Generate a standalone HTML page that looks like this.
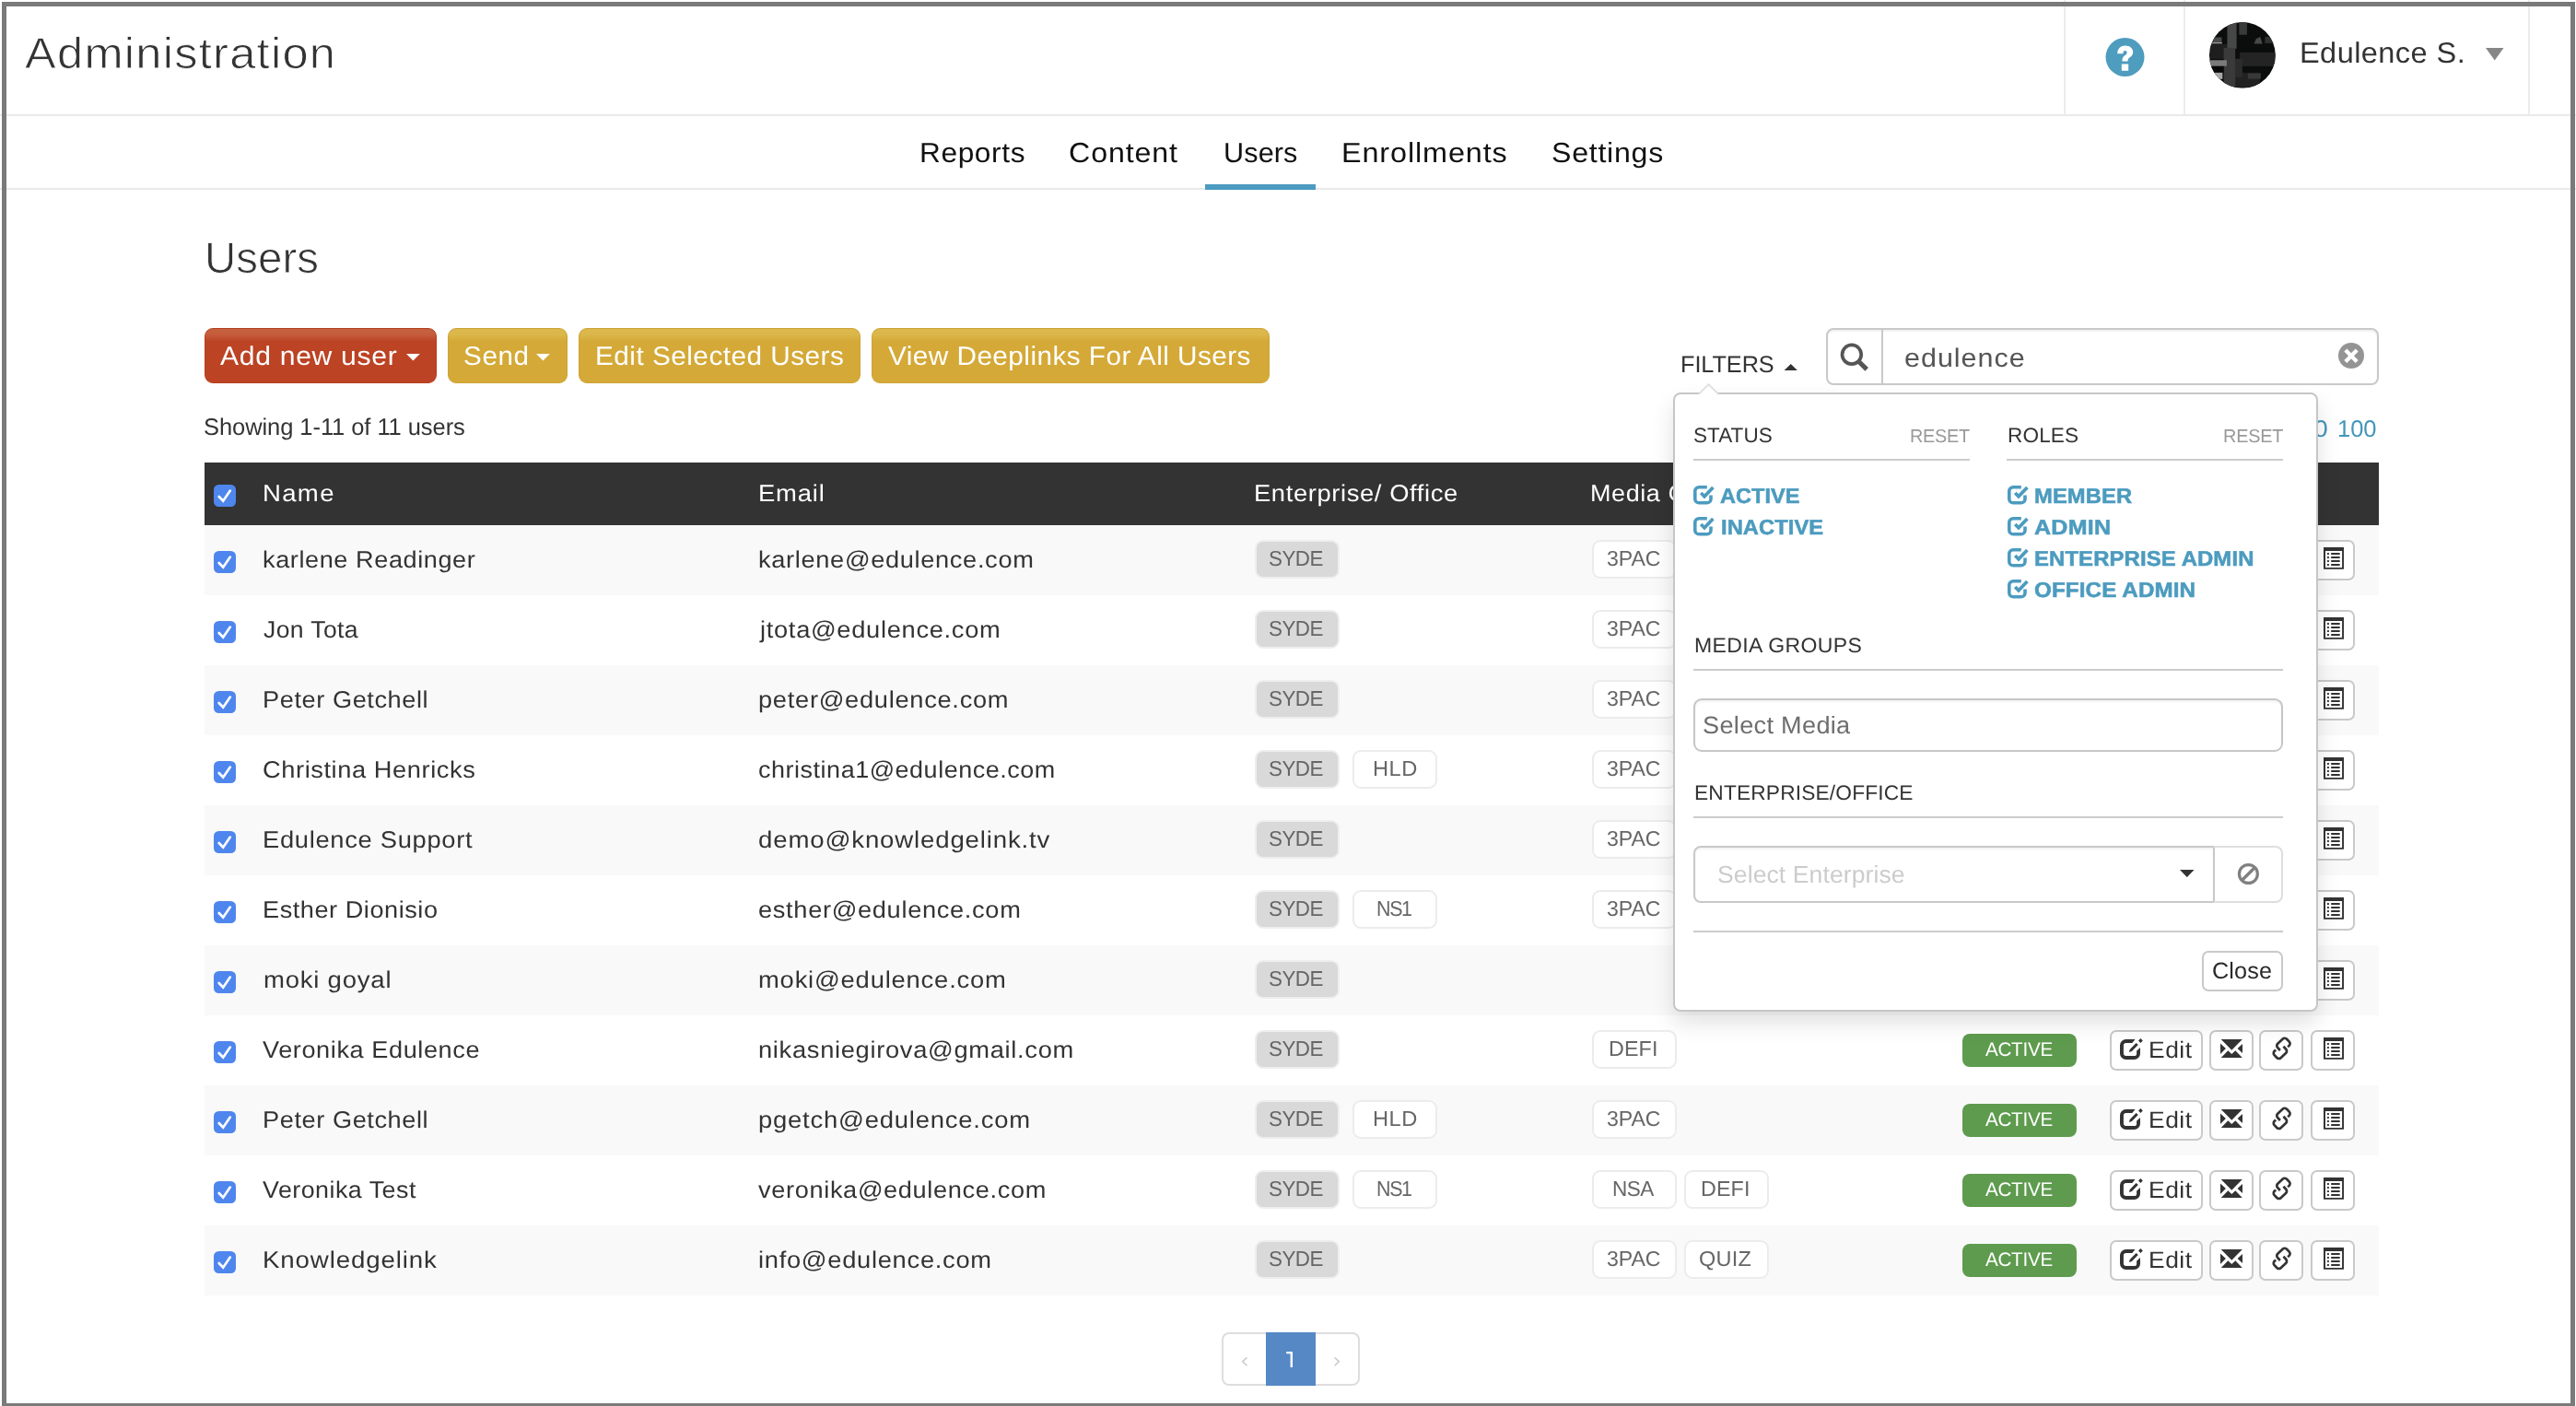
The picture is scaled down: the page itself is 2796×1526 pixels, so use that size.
<!DOCTYPE html>
<html lang="en"><head><meta charset="utf-8"><title>Administration - Users</title>
<style>
html,body{margin:0;padding:0;background:#fff}
body{width:2796px;height:1526px;position:relative;overflow:hidden;font-family:"Liberation Sans",sans-serif;color:#333}
#page{position:absolute;left:0;top:0;width:2796px;height:1526px;will-change:transform}
.t{position:absolute;white-space:pre;transform-origin:0 0;display:block;text-rendering:geometricPrecision}
.abs,i{position:absolute;display:block}
.frame{position:absolute;background:#7a7a7a;z-index:50}
.fl{left:2px;top:2px;width:4.83px;height:1524px}
.ft{left:2px;top:2px;width:2792.9px;height:4.83px}
.fr{left:2790px;top:2px;width:4.9px;height:1524px}
.fb{left:2px;top:1523.1px;width:2792.9px;height:3px}
.hb{left:0;width:2796px;height:2px;background:#e9e9e9}
.vd{top:0;width:2px;height:124px;background:#ececec}
.tri-d,.tri-u{width:0;height:0;border-style:solid;border-color:transparent}
.btn{position:absolute;top:356px;height:60px;border-radius:9px;box-sizing:border-box}
.btn.red{background:linear-gradient(#c6623f 0,#c55d3c 6px,#bc4324 14px,#bc4324 100%);border:1px solid #b5401f}
.btn.yel{background:linear-gradient(#dcb94e 0,#dbb74a 6px,#d4a937 14px,#d4a937 100%);border:1px solid #cda434}
.search{position:absolute;left:1982.2px;top:356.2px;width:599.6px;height:61.6px;box-sizing:border-box;border:2px solid #c9c9c9;border-radius:8px;background:#fff;box-shadow:inset 0 2px 2px rgba(0,0,0,.06)}
.sdiv{left:58px;top:0;width:1.8px;height:100%;background:#c9c9c9}
.thead{position:absolute;left:222px;top:502px;width:2360px;height:68px;background:#333}
.row{position:absolute;left:222px;width:2360px;height:76px}
.row.odd{background:#f9f9f9}
.cb{width:24px;height:24px;border-radius:5.5px;background:#4e86ee}
.cb svg{position:absolute;left:0;top:0}
.bdg{width:91.5px;height:41.8px;box-sizing:border-box;border:2px solid #ececec;border-radius:9px;background:#fff}
.bdg.g{background:#d9d9d9;border-color:#eee}
.act{width:123.9px;height:35.8px;border-radius:8px;background:#5e9b4e}
.ab{position:absolute;width:47.8px;height:43.6px;box-sizing:border-box;border:2px solid #c9c9c9;border-radius:7px;background:#fff}
.pag{position:absolute;left:1326px;top:1446px;width:150px;height:58px;box-sizing:border-box;border:2px solid #ddd;border-radius:8px;background:#fff}
.pa{left:46px;top:-2px;width:54px;height:58px;background:#5588c5}
.panel{position:absolute;left:1816px;top:426px;width:700px;height:672px;box-sizing:border-box;background:#fff;border:2px solid #c6c6c6;border-radius:8px;box-shadow:0 12px 24px rgba(0,0,0,.12)}
.arrow{left:23.4px;top:-12.1px}
.hl{height:2px;background:#ccc}
.inp{position:absolute;box-sizing:border-box;border:2px solid #ccc;border-radius:9px;background:#fff;box-shadow:inset 0 2px 2px rgba(0,0,0,.05)}
</style></head>
<body>
<div id="page">
<div class="frame fl"></div><div class="frame ft"></div><div class="frame fr"></div><div class="frame fb"></div>
<header><i class="hb" style="top:124px"></i>
<span class="t" style="left:27.47px;top:35px;font-size:47.36px;line-height:47.36px;color:#333;letter-spacing:1.189px;transform:scaleX(1.0679);-webkit-text-stroke:0.8px #fff;">Administration</span>
<i class="vd" style="left:2240px"></i><i class="vd" style="left:2370px"></i><i class="vd" style="left:2744px"></i>
<svg class="abs" style="left:2285px;top:41px" width="43" height="43" viewBox="0 0 43 43"><circle cx="21.5" cy="21" r="21" fill="#4e9cbe"/>
<path d="M13.2 17.2 C13.2 11.6 17 8.4 21.8 8.4 C26.6 8.4 30.2 11.2 30.2 15.4 C30.2 18.6 28.4 20.2 26.4 21.6 C24.8 22.8 24.6 23.4 24.6 25.6 H18.4 C18.4 22.2 19 20.8 21.2 19.2 C22.8 18 23.6 17.4 23.6 16 C23.6 14.8 22.8 14 21.6 14 C20.2 14 19.4 15 19.4 17.2 Z M17.8 28.6 H25.2 V35.8 H17.8 Z" fill="#fff"/></svg>
<svg class="abs" style="left:2398.1px;top:23.9px" width="71.8" height="71.8" viewBox="0 0 72 72"><defs><clipPath id="av"><circle cx="36" cy="36" r="36"/></clipPath></defs>
<g clip-path="url(#av)"><rect width="72" height="72" fill="#0b0c0c"/>
<rect x="1" y="24" width="20" height="16" fill="#1e1e1e"/><rect x="33" y="33" width="39" height="15" fill="#242424"/><rect x="28" y="55" width="27" height="16" fill="#212121"/>
<rect x="19.5" y="0" width="10.2" height="29" fill="#474747"/><rect x="15.7" y="28" width="12.6" height="44" fill="#3a3a3a"/><rect x="28" y="40" width="8" height="20" fill="#2c2c2c"/>
<rect x="32.4" y="0" width="8.6" height="13.8" fill="#3a3a3a"/>
<rect x="4.3" y="16.5" width="9.2" height="5.5" fill="#4a4a4a"/><rect x="2" y="22" width="12" height="1.4" fill="#9a9a9a"/>
<rect x="0" y="41.4" width="19" height="6.4" fill="#7a7a7a"/><rect x="2" y="48.4" width="13.4" height="6.5" fill="#080808"/><rect x="6" y="55" width="8.4" height="7" fill="#a8a8a8"/>
<path d="M48.6 23.5 L51 18 L55.5 16 L57.8 23.5 Z" fill="#484848"/><rect x="60.5" y="16" width="9" height="7" fill="#303030"/>
<rect x="42" y="55.7" width="14" height="6" fill="#383838"/></g></svg>
<span class="t" style="left:2495.94px;top:42px;font-size:31.5px;line-height:31.5px;color:#333;letter-spacing:0.422px;transform:scaleX(1.0323);">Edulence S.</span>
<svg class="abs" style="left:2698.2px;top:52px" width="19.5" height="13.5" viewBox="0 0 19.5 13.5"><polygon points="0,0 19.5,0 9.75,13.5" fill="#868686"/></svg>
</header>
<nav><i class="hb" style="top:204px"></i>
<span class="t" style="left:997.71px;top:152px;font-size:30.3px;line-height:30.3px;color:#111;letter-spacing:0.594px;transform:scaleX(1.0437);">Reports</span>
<span class="t" style="left:1160.04px;top:152px;font-size:30.3px;line-height:30.3px;color:#111;letter-spacing:0.841px;transform:scaleX(1.0619);">Content</span>
<span class="t" style="left:1327.68px;top:152px;font-size:30.3px;line-height:30.3px;color:#111;letter-spacing:0.138px;transform:scaleX(1.0088);">Users</span>
<span class="t" style="left:1456.46px;top:152px;font-size:30.3px;line-height:30.3px;color:#111;letter-spacing:0.825px;transform:scaleX(1.0683);">Enrollments</span>
<span class="t" style="left:1683.54px;top:152px;font-size:30.3px;line-height:30.3px;color:#111;letter-spacing:0.709px;transform:scaleX(1.0593);">Settings</span>
<i class="abs" style="left:1308px;top:200px;width:120px;height:6px;background:#4c9bc0"></i>
</nav>
<main>
<span class="t" style="left:222.19px;top:257px;font-size:47.36px;line-height:47.36px;color:#333;letter-spacing:0.046px;transform:scaleX(1.0019);-webkit-text-stroke:0.8px #fff;">Users</span>
<div class="btn red" style="left:222px;width:252.0px"></div>
<span class="t" style="left:239.10px;top:373px;font-size:28.6px;line-height:28.6px;color:#fff;letter-spacing:0.656px;transform:scaleX(1.0529);">Add new user</span>
<svg class="abs" style="left:441px;top:384.2px" width="14.8" height="7.6" viewBox="0 0 14.8 7.6"><polygon points="0,0 14.8,0 7.4,7.6" fill="#fff"/></svg>
<div class="btn yel" style="left:486.2px;width:129.6px"></div>
<span class="t" style="left:503.06px;top:373px;font-size:28.6px;line-height:28.6px;color:#fff;letter-spacing:0.612px;transform:scaleX(1.0358);">Send</span>
<svg class="abs" style="left:582.2px;top:384.2px" width="14.8" height="7.6" viewBox="0 0 14.8 7.6"><polygon points="0,0 14.8,0 7.4,7.6" fill="#fff"/></svg>
<div class="btn yel" style="left:628.2px;width:305.5px"></div>
<span class="t" style="left:646.12px;top:373px;font-size:28.6px;line-height:28.6px;color:#fff;letter-spacing:0.449px;transform:scaleX(1.0413);">Edit Selected Users</span>
<div class="btn yel" style="left:946px;width:432.0px"></div>
<span class="t" style="left:963.80px;top:373px;font-size:28.6px;line-height:28.6px;color:#fff;letter-spacing:0.432px;transform:scaleX(1.0403);">View Deeplinks For All Users</span>
<span class="t" style="left:221.41px;top:452px;font-size:25.7px;line-height:25.7px;color:#333;letter-spacing:-0.072px;transform:scaleX(0.9930);">Showing 1-11 of 11 users</span>
<span class="t" style="left:1824.21px;top:384px;font-size:25.4px;line-height:25.4px;color:#333;letter-spacing:-0.059px;transform:scaleX(0.9957);">FILTERS</span>
<svg class="abs" style="left:1936.4px;top:394.5px" width="15.5" height="7.6" viewBox="0 0 15.5 7.6"><polygon points="0,7.6 7.75,0 15.5,7.6" fill="#333"/></svg>
<div class="search"><i class="sdiv"></i>
<svg class="abs" style="left:0;top:0" width="60" height="57" viewBox="0 0 60 57"><circle cx="25.85" cy="26.8" r="10.35" fill="none" stroke="#555" stroke-width="3.7"/><path d="M32.6 33.5 L42.2 42.85" stroke="#555" stroke-width="5"/></svg>
<svg class="abs" style="left:552.7px;top:12.8px" width="30" height="30" viewBox="-15 -15 30 30"><circle cx="0" cy="0" r="14" fill="#949494"/><path d="M-6.2 -6 L6.2 6.4 M6.2 -6 L-6.2 6.4" stroke="#fff" stroke-width="4.3"/></svg>
</div>
<span class="t" style="left:2066.53px;top:375px;font-size:28.4px;line-height:28.4px;color:#555;letter-spacing:0.918px;transform:scaleX(1.0744);">edulence</span>
<span class="t" style="left:2494.32px;top:454px;font-size:25.7px;line-height:25.7px;color:#4296ba;letter-spacing:1.709px;transform:scaleX(1.0829);">50</span>
<span class="t" style="left:2537.20px;top:454px;font-size:25.7px;line-height:25.7px;color:#4296ba;letter-spacing:-0.084px;transform:scaleX(0.9951);">100</span>
<div class="thead"></div>
<i class="cb" style="left:232px;top:526px"><svg width="24" height="24" viewBox="0 0 24 24"><path d="M5.7 13 L10.2 17.7 L17.8 6.6" fill="none" stroke="#fff" stroke-width="2.7" stroke-linecap="round" stroke-linejoin="miter"/></svg></i>
<span class="t" style="left:284.85px;top:524px;font-size:25.7px;line-height:25.7px;color:#fff;letter-spacing:1.226px;transform:scaleX(1.0728);">Name</span>
<span class="t" style="left:822.97px;top:524px;font-size:25.7px;line-height:25.7px;color:#fff;letter-spacing:0.778px;transform:scaleX(1.0670);">Email</span>
<span class="t" style="left:1360.57px;top:524px;font-size:25.7px;line-height:25.7px;color:#fff;letter-spacing:0.572px;transform:scaleX(1.0647);">Enterprise/ Office</span>
<span class="t" style="left:1726.10px;top:524px;font-size:25.7px;line-height:25.7px;color:#fff;letter-spacing:0.561px;transform:scaleX(1.0500);">Media Groups</span>
<span class="t" style="left:2128.94px;top:524px;font-size:25.7px;line-height:25.7px;color:#fff;letter-spacing:0.680px;transform:scaleX(1.0622);">Status</span>
<div class="row odd" style="top:570px"></div>
<i class="cb" style="left:232px;top:598px"><svg width="24" height="24" viewBox="0 0 24 24"><path d="M5.7 13 L10.2 17.7 L17.8 6.6" fill="none" stroke="#fff" stroke-width="2.7" stroke-linecap="round" stroke-linejoin="miter"/></svg></i>
<span class="t" style="left:285.25px;top:596px;font-size:25.7px;line-height:25.7px;color:#333;letter-spacing:0.556px;transform:scaleX(1.0547);">karlene Readinger</span>
<span class="t" style="left:822.94px;top:596px;font-size:25.7px;line-height:25.7px;color:#333;letter-spacing:0.636px;transform:scaleX(1.0584);">karlene@edulence.com</span>
<i class="bdg g" style="left:1362.3px;top:586.1px"></i>
<span class="t" style="left:1376.93px;top:595px;font-size:23.1px;line-height:23.1px;color:#666;letter-spacing:-0.523px;transform:scaleX(0.9697);">SYDE</span>
<i class="bdg" style="left:1728.2px;top:586.1px"></i>
<span class="t" style="left:1743.90px;top:595px;font-size:23.1px;line-height:23.1px;color:#666;letter-spacing:-0.020px;transform:scaleX(0.9987);">3PAC</span>
<i class="act" style="left:2130px;top:589.9px"></i>
<span class="t" style="left:2154.90px;top:597px;font-size:21.1px;line-height:21.1px;color:#fff;letter-spacing:-0.278px;transform:scaleX(0.9782);">ACTIVE</span>
<div class="ab" style="left:2290.1px;top:586.1px;width:101.3px"><svg class="abs" style="left:8.9px;top:5.9px" width="26" height="25" viewBox="0 -2 26 25"><path d="M16.8 1.95 H6.5 A4.55 4.55 0 0 0 1.95 6.5 V15.4 A4.55 4.55 0 0 0 6.5 19.95 H15.5 A4.55 4.55 0 0 0 20.05 15.4 V8.9" fill="none" stroke="#333" stroke-width="3.9"/><path d="M16.8 -0.2 L17.4 -0.2 L17.4 4.1 L13.3 4.1 Z M17.9 8.7 L22.3 8.7 L17.9 12.8 Z" fill="#fff"/><path d="M9.8 14 L10.8 10.9 L17.6 4.1 L19.8 6.1 L12.9 13 Z M22.4 -0.9 L24.8 1.5 L22.4 3.9 L20 1.5 Z" fill="#333"/></svg></div>
<span class="t" style="left:2331.90px;top:596px;font-size:25.2px;line-height:25.2px;color:#333;letter-spacing:0.515px;transform:scaleX(1.0478);">Edit</span>
<div class="ab" style="left:2398.15px;top:586.1px"><svg class="abs" style="left:9.9px;top:7.8px" width="24.2" height="20.2" viewBox="0 0 24.2 20.2"><path d="M0.7 0 H23.9 L12.3 11.8 Z M0 4.4 L5.9 10.1 L0 15.9 Z M24.1 5 L18.6 10.1 L24.1 15.2 Z M0.7 20.1 L8.3 12.2 L12.3 16.1 L16.3 12.2 L23.9 20.1 Z" fill="#333"/></svg></div>
<div class="ab" style="left:2452.15px;top:586.1px"><svg class="abs" style="left:0;top:0" width="43.8" height="39.6" viewBox="0 0 43.8 39.6"><g fill="none" stroke="#333" stroke-width="2.7"><path transform="translate(16.05 14.8) rotate(-43)" d="M0 7.1 V3 A3 3 0 0 1 3 0 H10.6 A3 3 0 0 1 13.6 3 V7 A3 3 0 0 1 10.6 10 H8.6"/><path transform="rotate(180 22.67 17.87) translate(16.05 14.8) rotate(-43)" d="M0 7.1 V3 A3 3 0 0 1 3 0 H10.6 A3 3 0 0 1 13.6 3 V7 A3 3 0 0 1 10.6 10 H8.6"/></g></svg></div>
<div class="ab" style="left:2508.14px;top:586.1px"><svg class="abs" style="left:11.46px;top:6px" width="22.2" height="24" viewBox="0 0 22.2 24"><path d="M0 0 H22.1 V23.8 H0 Z M2 3.9 V22 H20.1 V3.9 Z" fill="#333" fill-rule="evenodd"/><g stroke="#333" stroke-width="1.9" stroke-linecap="round"><path d="M4.7 6.95 h0.5 M8.9 6.95 h8.1 M4.7 11 h0.5 M8.9 11 h8.1 M4.7 15 h0.5 M8.9 15 h8.1 M4.7 19 h0.5 M8.9 19 h8.1"/></g></svg></div>
<div class="row" style="top:646px"></div>
<i class="cb" style="left:232px;top:674px"><svg width="24" height="24" viewBox="0 0 24 24"><path d="M5.7 13 L10.2 17.7 L17.8 6.6" fill="none" stroke="#fff" stroke-width="2.7" stroke-linecap="round" stroke-linejoin="miter"/></svg></i>
<span class="t" style="left:286.30px;top:672px;font-size:25.7px;line-height:25.7px;color:#333;letter-spacing:0.372px;transform:scaleX(1.0336);">Jon Tota</span>
<span class="t" style="left:825.06px;top:672px;font-size:25.7px;line-height:25.7px;color:#333;letter-spacing:0.652px;transform:scaleX(1.0614);">jtota@edulence.com</span>
<i class="bdg g" style="left:1362.3px;top:662.1px"></i>
<span class="t" style="left:1376.93px;top:671px;font-size:23.1px;line-height:23.1px;color:#666;letter-spacing:-0.523px;transform:scaleX(0.9697);">SYDE</span>
<i class="bdg" style="left:1728.2px;top:662.1px"></i>
<span class="t" style="left:1743.90px;top:671px;font-size:23.1px;line-height:23.1px;color:#666;letter-spacing:-0.020px;transform:scaleX(0.9987);">3PAC</span>
<i class="act" style="left:2130px;top:665.9px"></i>
<span class="t" style="left:2154.90px;top:673px;font-size:21.1px;line-height:21.1px;color:#fff;letter-spacing:-0.278px;transform:scaleX(0.9782);">ACTIVE</span>
<div class="ab" style="left:2290.1px;top:662.1px;width:101.3px"><svg class="abs" style="left:8.9px;top:5.9px" width="26" height="25" viewBox="0 -2 26 25"><path d="M16.8 1.95 H6.5 A4.55 4.55 0 0 0 1.95 6.5 V15.4 A4.55 4.55 0 0 0 6.5 19.95 H15.5 A4.55 4.55 0 0 0 20.05 15.4 V8.9" fill="none" stroke="#333" stroke-width="3.9"/><path d="M16.8 -0.2 L17.4 -0.2 L17.4 4.1 L13.3 4.1 Z M17.9 8.7 L22.3 8.7 L17.9 12.8 Z" fill="#fff"/><path d="M9.8 14 L10.8 10.9 L17.6 4.1 L19.8 6.1 L12.9 13 Z M22.4 -0.9 L24.8 1.5 L22.4 3.9 L20 1.5 Z" fill="#333"/></svg></div>
<span class="t" style="left:2331.90px;top:672px;font-size:25.2px;line-height:25.2px;color:#333;letter-spacing:0.515px;transform:scaleX(1.0478);">Edit</span>
<div class="ab" style="left:2398.15px;top:662.1px"><svg class="abs" style="left:9.9px;top:7.8px" width="24.2" height="20.2" viewBox="0 0 24.2 20.2"><path d="M0.7 0 H23.9 L12.3 11.8 Z M0 4.4 L5.9 10.1 L0 15.9 Z M24.1 5 L18.6 10.1 L24.1 15.2 Z M0.7 20.1 L8.3 12.2 L12.3 16.1 L16.3 12.2 L23.9 20.1 Z" fill="#333"/></svg></div>
<div class="ab" style="left:2452.15px;top:662.1px"><svg class="abs" style="left:0;top:0" width="43.8" height="39.6" viewBox="0 0 43.8 39.6"><g fill="none" stroke="#333" stroke-width="2.7"><path transform="translate(16.05 14.8) rotate(-43)" d="M0 7.1 V3 A3 3 0 0 1 3 0 H10.6 A3 3 0 0 1 13.6 3 V7 A3 3 0 0 1 10.6 10 H8.6"/><path transform="rotate(180 22.67 17.87) translate(16.05 14.8) rotate(-43)" d="M0 7.1 V3 A3 3 0 0 1 3 0 H10.6 A3 3 0 0 1 13.6 3 V7 A3 3 0 0 1 10.6 10 H8.6"/></g></svg></div>
<div class="ab" style="left:2508.14px;top:662.1px"><svg class="abs" style="left:11.46px;top:6px" width="22.2" height="24" viewBox="0 0 22.2 24"><path d="M0 0 H22.1 V23.8 H0 Z M2 3.9 V22 H20.1 V3.9 Z" fill="#333" fill-rule="evenodd"/><g stroke="#333" stroke-width="1.9" stroke-linecap="round"><path d="M4.7 6.95 h0.5 M8.9 6.95 h8.1 M4.7 11 h0.5 M8.9 11 h8.1 M4.7 15 h0.5 M8.9 15 h8.1 M4.7 19 h0.5 M8.9 19 h8.1"/></g></svg></div>
<div class="row odd" style="top:722px"></div>
<i class="cb" style="left:232px;top:750px"><svg width="24" height="24" viewBox="0 0 24 24"><path d="M5.7 13 L10.2 17.7 L17.8 6.6" fill="none" stroke="#fff" stroke-width="2.7" stroke-linecap="round" stroke-linejoin="miter"/></svg></i>
<span class="t" style="left:284.88px;top:748px;font-size:25.7px;line-height:25.7px;color:#333;letter-spacing:0.545px;transform:scaleX(1.0575);">Peter Getchell</span>
<span class="t" style="left:823.24px;top:748px;font-size:25.7px;line-height:25.7px;color:#333;letter-spacing:0.670px;transform:scaleX(1.0610);">peter@edulence.com</span>
<i class="bdg g" style="left:1362.3px;top:738.1px"></i>
<span class="t" style="left:1376.93px;top:747px;font-size:23.1px;line-height:23.1px;color:#666;letter-spacing:-0.523px;transform:scaleX(0.9697);">SYDE</span>
<i class="bdg" style="left:1728.2px;top:738.1px"></i>
<span class="t" style="left:1743.90px;top:747px;font-size:23.1px;line-height:23.1px;color:#666;letter-spacing:-0.020px;transform:scaleX(0.9987);">3PAC</span>
<i class="act" style="left:2130px;top:741.9px"></i>
<span class="t" style="left:2154.90px;top:749px;font-size:21.1px;line-height:21.1px;color:#fff;letter-spacing:-0.278px;transform:scaleX(0.9782);">ACTIVE</span>
<div class="ab" style="left:2290.1px;top:738.1px;width:101.3px"><svg class="abs" style="left:8.9px;top:5.9px" width="26" height="25" viewBox="0 -2 26 25"><path d="M16.8 1.95 H6.5 A4.55 4.55 0 0 0 1.95 6.5 V15.4 A4.55 4.55 0 0 0 6.5 19.95 H15.5 A4.55 4.55 0 0 0 20.05 15.4 V8.9" fill="none" stroke="#333" stroke-width="3.9"/><path d="M16.8 -0.2 L17.4 -0.2 L17.4 4.1 L13.3 4.1 Z M17.9 8.7 L22.3 8.7 L17.9 12.8 Z" fill="#fff"/><path d="M9.8 14 L10.8 10.9 L17.6 4.1 L19.8 6.1 L12.9 13 Z M22.4 -0.9 L24.8 1.5 L22.4 3.9 L20 1.5 Z" fill="#333"/></svg></div>
<span class="t" style="left:2331.90px;top:748px;font-size:25.2px;line-height:25.2px;color:#333;letter-spacing:0.515px;transform:scaleX(1.0478);">Edit</span>
<div class="ab" style="left:2398.15px;top:738.1px"><svg class="abs" style="left:9.9px;top:7.8px" width="24.2" height="20.2" viewBox="0 0 24.2 20.2"><path d="M0.7 0 H23.9 L12.3 11.8 Z M0 4.4 L5.9 10.1 L0 15.9 Z M24.1 5 L18.6 10.1 L24.1 15.2 Z M0.7 20.1 L8.3 12.2 L12.3 16.1 L16.3 12.2 L23.9 20.1 Z" fill="#333"/></svg></div>
<div class="ab" style="left:2452.15px;top:738.1px"><svg class="abs" style="left:0;top:0" width="43.8" height="39.6" viewBox="0 0 43.8 39.6"><g fill="none" stroke="#333" stroke-width="2.7"><path transform="translate(16.05 14.8) rotate(-43)" d="M0 7.1 V3 A3 3 0 0 1 3 0 H10.6 A3 3 0 0 1 13.6 3 V7 A3 3 0 0 1 10.6 10 H8.6"/><path transform="rotate(180 22.67 17.87) translate(16.05 14.8) rotate(-43)" d="M0 7.1 V3 A3 3 0 0 1 3 0 H10.6 A3 3 0 0 1 13.6 3 V7 A3 3 0 0 1 10.6 10 H8.6"/></g></svg></div>
<div class="ab" style="left:2508.14px;top:738.1px"><svg class="abs" style="left:11.46px;top:6px" width="22.2" height="24" viewBox="0 0 22.2 24"><path d="M0 0 H22.1 V23.8 H0 Z M2 3.9 V22 H20.1 V3.9 Z" fill="#333" fill-rule="evenodd"/><g stroke="#333" stroke-width="1.9" stroke-linecap="round"><path d="M4.7 6.95 h0.5 M8.9 6.95 h8.1 M4.7 11 h0.5 M8.9 11 h8.1 M4.7 15 h0.5 M8.9 15 h8.1 M4.7 19 h0.5 M8.9 19 h8.1"/></g></svg></div>
<div class="row" style="top:798px"></div>
<i class="cb" style="left:232px;top:826px"><svg width="24" height="24" viewBox="0 0 24 24"><path d="M5.7 13 L10.2 17.7 L17.8 6.6" fill="none" stroke="#fff" stroke-width="2.7" stroke-linecap="round" stroke-linejoin="miter"/></svg></i>
<span class="t" style="left:284.84px;top:824px;font-size:25.7px;line-height:25.7px;color:#333;letter-spacing:0.558px;transform:scaleX(1.0595);">Christina Henricks</span>
<span class="t" style="left:822.95px;top:824px;font-size:25.7px;line-height:25.7px;color:#333;letter-spacing:0.510px;transform:scaleX(1.0490);">christina1@edulence.com</span>
<i class="bdg g" style="left:1362.3px;top:814.1px"></i>
<span class="t" style="left:1376.93px;top:823px;font-size:23.1px;line-height:23.1px;color:#666;letter-spacing:-0.523px;transform:scaleX(0.9697);">SYDE</span>
<i class="bdg" style="left:1468.2px;top:814.1px"></i>
<span class="t" style="left:1489.63px;top:823px;font-size:23.1px;line-height:23.1px;color:#666;letter-spacing:0.435px;transform:scaleX(1.0244);">HLD</span>
<i class="bdg" style="left:1728.2px;top:814.1px"></i>
<span class="t" style="left:1743.90px;top:823px;font-size:23.1px;line-height:23.1px;color:#666;letter-spacing:-0.020px;transform:scaleX(0.9987);">3PAC</span>
<i class="act" style="left:2130px;top:817.9px"></i>
<span class="t" style="left:2154.90px;top:825px;font-size:21.1px;line-height:21.1px;color:#fff;letter-spacing:-0.278px;transform:scaleX(0.9782);">ACTIVE</span>
<div class="ab" style="left:2290.1px;top:814.1px;width:101.3px"><svg class="abs" style="left:8.9px;top:5.9px" width="26" height="25" viewBox="0 -2 26 25"><path d="M16.8 1.95 H6.5 A4.55 4.55 0 0 0 1.95 6.5 V15.4 A4.55 4.55 0 0 0 6.5 19.95 H15.5 A4.55 4.55 0 0 0 20.05 15.4 V8.9" fill="none" stroke="#333" stroke-width="3.9"/><path d="M16.8 -0.2 L17.4 -0.2 L17.4 4.1 L13.3 4.1 Z M17.9 8.7 L22.3 8.7 L17.9 12.8 Z" fill="#fff"/><path d="M9.8 14 L10.8 10.9 L17.6 4.1 L19.8 6.1 L12.9 13 Z M22.4 -0.9 L24.8 1.5 L22.4 3.9 L20 1.5 Z" fill="#333"/></svg></div>
<span class="t" style="left:2331.90px;top:824px;font-size:25.2px;line-height:25.2px;color:#333;letter-spacing:0.515px;transform:scaleX(1.0478);">Edit</span>
<div class="ab" style="left:2398.15px;top:814.1px"><svg class="abs" style="left:9.9px;top:7.8px" width="24.2" height="20.2" viewBox="0 0 24.2 20.2"><path d="M0.7 0 H23.9 L12.3 11.8 Z M0 4.4 L5.9 10.1 L0 15.9 Z M24.1 5 L18.6 10.1 L24.1 15.2 Z M0.7 20.1 L8.3 12.2 L12.3 16.1 L16.3 12.2 L23.9 20.1 Z" fill="#333"/></svg></div>
<div class="ab" style="left:2452.15px;top:814.1px"><svg class="abs" style="left:0;top:0" width="43.8" height="39.6" viewBox="0 0 43.8 39.6"><g fill="none" stroke="#333" stroke-width="2.7"><path transform="translate(16.05 14.8) rotate(-43)" d="M0 7.1 V3 A3 3 0 0 1 3 0 H10.6 A3 3 0 0 1 13.6 3 V7 A3 3 0 0 1 10.6 10 H8.6"/><path transform="rotate(180 22.67 17.87) translate(16.05 14.8) rotate(-43)" d="M0 7.1 V3 A3 3 0 0 1 3 0 H10.6 A3 3 0 0 1 13.6 3 V7 A3 3 0 0 1 10.6 10 H8.6"/></g></svg></div>
<div class="ab" style="left:2508.14px;top:814.1px"><svg class="abs" style="left:11.46px;top:6px" width="22.2" height="24" viewBox="0 0 22.2 24"><path d="M0 0 H22.1 V23.8 H0 Z M2 3.9 V22 H20.1 V3.9 Z" fill="#333" fill-rule="evenodd"/><g stroke="#333" stroke-width="1.9" stroke-linecap="round"><path d="M4.7 6.95 h0.5 M8.9 6.95 h8.1 M4.7 11 h0.5 M8.9 11 h8.1 M4.7 15 h0.5 M8.9 15 h8.1 M4.7 19 h0.5 M8.9 19 h8.1"/></g></svg></div>
<div class="row odd" style="top:874px"></div>
<i class="cb" style="left:232px;top:902px"><svg width="24" height="24" viewBox="0 0 24 24"><path d="M5.7 13 L10.2 17.7 L17.8 6.6" fill="none" stroke="#fff" stroke-width="2.7" stroke-linecap="round" stroke-linejoin="miter"/></svg></i>
<span class="t" style="left:284.87px;top:900px;font-size:25.7px;line-height:25.7px;color:#333;letter-spacing:0.655px;transform:scaleX(1.0632);">Edulence Support</span>
<span class="t" style="left:822.93px;top:900px;font-size:25.7px;line-height:25.7px;color:#333;letter-spacing:0.786px;transform:scaleX(1.0743);">demo@knowledgelink.tv</span>
<i class="bdg g" style="left:1362.3px;top:890.1px"></i>
<span class="t" style="left:1376.93px;top:899px;font-size:23.1px;line-height:23.1px;color:#666;letter-spacing:-0.523px;transform:scaleX(0.9697);">SYDE</span>
<i class="bdg" style="left:1728.2px;top:890.1px"></i>
<span class="t" style="left:1743.90px;top:899px;font-size:23.1px;line-height:23.1px;color:#666;letter-spacing:-0.020px;transform:scaleX(0.9987);">3PAC</span>
<i class="act" style="left:2130px;top:893.9px"></i>
<span class="t" style="left:2154.90px;top:901px;font-size:21.1px;line-height:21.1px;color:#fff;letter-spacing:-0.278px;transform:scaleX(0.9782);">ACTIVE</span>
<div class="ab" style="left:2290.1px;top:890.1px;width:101.3px"><svg class="abs" style="left:8.9px;top:5.9px" width="26" height="25" viewBox="0 -2 26 25"><path d="M16.8 1.95 H6.5 A4.55 4.55 0 0 0 1.95 6.5 V15.4 A4.55 4.55 0 0 0 6.5 19.95 H15.5 A4.55 4.55 0 0 0 20.05 15.4 V8.9" fill="none" stroke="#333" stroke-width="3.9"/><path d="M16.8 -0.2 L17.4 -0.2 L17.4 4.1 L13.3 4.1 Z M17.9 8.7 L22.3 8.7 L17.9 12.8 Z" fill="#fff"/><path d="M9.8 14 L10.8 10.9 L17.6 4.1 L19.8 6.1 L12.9 13 Z M22.4 -0.9 L24.8 1.5 L22.4 3.9 L20 1.5 Z" fill="#333"/></svg></div>
<span class="t" style="left:2331.90px;top:900px;font-size:25.2px;line-height:25.2px;color:#333;letter-spacing:0.515px;transform:scaleX(1.0478);">Edit</span>
<div class="ab" style="left:2398.15px;top:890.1px"><svg class="abs" style="left:9.9px;top:7.8px" width="24.2" height="20.2" viewBox="0 0 24.2 20.2"><path d="M0.7 0 H23.9 L12.3 11.8 Z M0 4.4 L5.9 10.1 L0 15.9 Z M24.1 5 L18.6 10.1 L24.1 15.2 Z M0.7 20.1 L8.3 12.2 L12.3 16.1 L16.3 12.2 L23.9 20.1 Z" fill="#333"/></svg></div>
<div class="ab" style="left:2452.15px;top:890.1px"><svg class="abs" style="left:0;top:0" width="43.8" height="39.6" viewBox="0 0 43.8 39.6"><g fill="none" stroke="#333" stroke-width="2.7"><path transform="translate(16.05 14.8) rotate(-43)" d="M0 7.1 V3 A3 3 0 0 1 3 0 H10.6 A3 3 0 0 1 13.6 3 V7 A3 3 0 0 1 10.6 10 H8.6"/><path transform="rotate(180 22.67 17.87) translate(16.05 14.8) rotate(-43)" d="M0 7.1 V3 A3 3 0 0 1 3 0 H10.6 A3 3 0 0 1 13.6 3 V7 A3 3 0 0 1 10.6 10 H8.6"/></g></svg></div>
<div class="ab" style="left:2508.14px;top:890.1px"><svg class="abs" style="left:11.46px;top:6px" width="22.2" height="24" viewBox="0 0 22.2 24"><path d="M0 0 H22.1 V23.8 H0 Z M2 3.9 V22 H20.1 V3.9 Z" fill="#333" fill-rule="evenodd"/><g stroke="#333" stroke-width="1.9" stroke-linecap="round"><path d="M4.7 6.95 h0.5 M8.9 6.95 h8.1 M4.7 11 h0.5 M8.9 11 h8.1 M4.7 15 h0.5 M8.9 15 h8.1 M4.7 19 h0.5 M8.9 19 h8.1"/></g></svg></div>
<div class="row" style="top:950px"></div>
<i class="cb" style="left:232px;top:978px"><svg width="24" height="24" viewBox="0 0 24 24"><path d="M5.7 13 L10.2 17.7 L17.8 6.6" fill="none" stroke="#fff" stroke-width="2.7" stroke-linecap="round" stroke-linejoin="miter"/></svg></i>
<span class="t" style="left:284.89px;top:976px;font-size:25.7px;line-height:25.7px;color:#333;letter-spacing:0.522px;transform:scaleX(1.0553);">Esther Dionisio</span>
<span class="t" style="left:822.94px;top:976px;font-size:25.7px;line-height:25.7px;color:#333;letter-spacing:0.644px;transform:scaleX(1.0589);">esther@edulence.com</span>
<i class="bdg g" style="left:1362.3px;top:966.1px"></i>
<span class="t" style="left:1376.93px;top:975px;font-size:23.1px;line-height:23.1px;color:#666;letter-spacing:-0.523px;transform:scaleX(0.9697);">SYDE</span>
<i class="bdg" style="left:1468.2px;top:966.1px"></i>
<span class="t" style="left:1494.02px;top:975px;font-size:23.1px;line-height:23.1px;color:#666;letter-spacing:-1.404px;transform:scaleX(0.9262);">NS1</span>
<i class="bdg" style="left:1728.2px;top:966.1px"></i>
<span class="t" style="left:1743.90px;top:975px;font-size:23.1px;line-height:23.1px;color:#666;letter-spacing:-0.020px;transform:scaleX(0.9987);">3PAC</span>
<i class="act" style="left:2130px;top:969.9px"></i>
<span class="t" style="left:2154.90px;top:977px;font-size:21.1px;line-height:21.1px;color:#fff;letter-spacing:-0.278px;transform:scaleX(0.9782);">ACTIVE</span>
<div class="ab" style="left:2290.1px;top:966.1px;width:101.3px"><svg class="abs" style="left:8.9px;top:5.9px" width="26" height="25" viewBox="0 -2 26 25"><path d="M16.8 1.95 H6.5 A4.55 4.55 0 0 0 1.95 6.5 V15.4 A4.55 4.55 0 0 0 6.5 19.95 H15.5 A4.55 4.55 0 0 0 20.05 15.4 V8.9" fill="none" stroke="#333" stroke-width="3.9"/><path d="M16.8 -0.2 L17.4 -0.2 L17.4 4.1 L13.3 4.1 Z M17.9 8.7 L22.3 8.7 L17.9 12.8 Z" fill="#fff"/><path d="M9.8 14 L10.8 10.9 L17.6 4.1 L19.8 6.1 L12.9 13 Z M22.4 -0.9 L24.8 1.5 L22.4 3.9 L20 1.5 Z" fill="#333"/></svg></div>
<span class="t" style="left:2331.90px;top:976px;font-size:25.2px;line-height:25.2px;color:#333;letter-spacing:0.515px;transform:scaleX(1.0478);">Edit</span>
<div class="ab" style="left:2398.15px;top:966.1px"><svg class="abs" style="left:9.9px;top:7.8px" width="24.2" height="20.2" viewBox="0 0 24.2 20.2"><path d="M0.7 0 H23.9 L12.3 11.8 Z M0 4.4 L5.9 10.1 L0 15.9 Z M24.1 5 L18.6 10.1 L24.1 15.2 Z M0.7 20.1 L8.3 12.2 L12.3 16.1 L16.3 12.2 L23.9 20.1 Z" fill="#333"/></svg></div>
<div class="ab" style="left:2452.15px;top:966.1px"><svg class="abs" style="left:0;top:0" width="43.8" height="39.6" viewBox="0 0 43.8 39.6"><g fill="none" stroke="#333" stroke-width="2.7"><path transform="translate(16.05 14.8) rotate(-43)" d="M0 7.1 V3 A3 3 0 0 1 3 0 H10.6 A3 3 0 0 1 13.6 3 V7 A3 3 0 0 1 10.6 10 H8.6"/><path transform="rotate(180 22.67 17.87) translate(16.05 14.8) rotate(-43)" d="M0 7.1 V3 A3 3 0 0 1 3 0 H10.6 A3 3 0 0 1 13.6 3 V7 A3 3 0 0 1 10.6 10 H8.6"/></g></svg></div>
<div class="ab" style="left:2508.14px;top:966.1px"><svg class="abs" style="left:11.46px;top:6px" width="22.2" height="24" viewBox="0 0 22.2 24"><path d="M0 0 H22.1 V23.8 H0 Z M2 3.9 V22 H20.1 V3.9 Z" fill="#333" fill-rule="evenodd"/><g stroke="#333" stroke-width="1.9" stroke-linecap="round"><path d="M4.7 6.95 h0.5 M8.9 6.95 h8.1 M4.7 11 h0.5 M8.9 11 h8.1 M4.7 15 h0.5 M8.9 15 h8.1 M4.7 19 h0.5 M8.9 19 h8.1"/></g></svg></div>
<div class="row odd" style="top:1026px"></div>
<i class="cb" style="left:232px;top:1054px"><svg width="24" height="24" viewBox="0 0 24 24"><path d="M5.7 13 L10.2 17.7 L17.8 6.6" fill="none" stroke="#fff" stroke-width="2.7" stroke-linecap="round" stroke-linejoin="miter"/></svg></i>
<span class="t" style="left:285.53px;top:1052px;font-size:25.7px;line-height:25.7px;color:#333;letter-spacing:0.725px;transform:scaleX(1.0711);">moki goyal</span>
<span class="t" style="left:823.23px;top:1052px;font-size:25.7px;line-height:25.7px;color:#333;letter-spacing:0.751px;transform:scaleX(1.0658);">moki@edulence.com</span>
<i class="bdg g" style="left:1362.3px;top:1042.1px"></i>
<span class="t" style="left:1376.93px;top:1051px;font-size:23.1px;line-height:23.1px;color:#666;letter-spacing:-0.523px;transform:scaleX(0.9697);">SYDE</span>
<i class="act" style="left:2130px;top:1045.9px"></i>
<span class="t" style="left:2154.90px;top:1053px;font-size:21.1px;line-height:21.1px;color:#fff;letter-spacing:-0.278px;transform:scaleX(0.9782);">ACTIVE</span>
<div class="ab" style="left:2290.1px;top:1042.1px;width:101.3px"><svg class="abs" style="left:8.9px;top:5.9px" width="26" height="25" viewBox="0 -2 26 25"><path d="M16.8 1.95 H6.5 A4.55 4.55 0 0 0 1.95 6.5 V15.4 A4.55 4.55 0 0 0 6.5 19.95 H15.5 A4.55 4.55 0 0 0 20.05 15.4 V8.9" fill="none" stroke="#333" stroke-width="3.9"/><path d="M16.8 -0.2 L17.4 -0.2 L17.4 4.1 L13.3 4.1 Z M17.9 8.7 L22.3 8.7 L17.9 12.8 Z" fill="#fff"/><path d="M9.8 14 L10.8 10.9 L17.6 4.1 L19.8 6.1 L12.9 13 Z M22.4 -0.9 L24.8 1.5 L22.4 3.9 L20 1.5 Z" fill="#333"/></svg></div>
<span class="t" style="left:2331.90px;top:1052px;font-size:25.2px;line-height:25.2px;color:#333;letter-spacing:0.515px;transform:scaleX(1.0478);">Edit</span>
<div class="ab" style="left:2398.15px;top:1042.1px"><svg class="abs" style="left:9.9px;top:7.8px" width="24.2" height="20.2" viewBox="0 0 24.2 20.2"><path d="M0.7 0 H23.9 L12.3 11.8 Z M0 4.4 L5.9 10.1 L0 15.9 Z M24.1 5 L18.6 10.1 L24.1 15.2 Z M0.7 20.1 L8.3 12.2 L12.3 16.1 L16.3 12.2 L23.9 20.1 Z" fill="#333"/></svg></div>
<div class="ab" style="left:2452.15px;top:1042.1px"><svg class="abs" style="left:0;top:0" width="43.8" height="39.6" viewBox="0 0 43.8 39.6"><g fill="none" stroke="#333" stroke-width="2.7"><path transform="translate(16.05 14.8) rotate(-43)" d="M0 7.1 V3 A3 3 0 0 1 3 0 H10.6 A3 3 0 0 1 13.6 3 V7 A3 3 0 0 1 10.6 10 H8.6"/><path transform="rotate(180 22.67 17.87) translate(16.05 14.8) rotate(-43)" d="M0 7.1 V3 A3 3 0 0 1 3 0 H10.6 A3 3 0 0 1 13.6 3 V7 A3 3 0 0 1 10.6 10 H8.6"/></g></svg></div>
<div class="ab" style="left:2508.14px;top:1042.1px"><svg class="abs" style="left:11.46px;top:6px" width="22.2" height="24" viewBox="0 0 22.2 24"><path d="M0 0 H22.1 V23.8 H0 Z M2 3.9 V22 H20.1 V3.9 Z" fill="#333" fill-rule="evenodd"/><g stroke="#333" stroke-width="1.9" stroke-linecap="round"><path d="M4.7 6.95 h0.5 M8.9 6.95 h8.1 M4.7 11 h0.5 M8.9 11 h8.1 M4.7 15 h0.5 M8.9 15 h8.1 M4.7 19 h0.5 M8.9 19 h8.1"/></g></svg></div>
<div class="row" style="top:1102px"></div>
<i class="cb" style="left:232px;top:1130px"><svg width="24" height="24" viewBox="0 0 24 24"><path d="M5.7 13 L10.2 17.7 L17.8 6.6" fill="none" stroke="#fff" stroke-width="2.7" stroke-linecap="round" stroke-linejoin="miter"/></svg></i>
<span class="t" style="left:285.20px;top:1128px;font-size:25.7px;line-height:25.7px;color:#333;letter-spacing:0.567px;transform:scaleX(1.0547);">Veronika Edulence</span>
<span class="t" style="left:823.24px;top:1128px;font-size:25.7px;line-height:25.7px;color:#333;letter-spacing:0.640px;transform:scaleX(1.0627);">nikasniegirova@gmail.com</span>
<i class="bdg g" style="left:1362.3px;top:1118.1px"></i>
<span class="t" style="left:1376.93px;top:1127px;font-size:23.1px;line-height:23.1px;color:#666;letter-spacing:-0.523px;transform:scaleX(0.9697);">SYDE</span>
<i class="bdg" style="left:1728.2px;top:1118.1px"></i>
<span class="t" style="left:1746.19px;top:1127px;font-size:23.1px;line-height:23.1px;color:#666;letter-spacing:0.121px;transform:scaleX(1.0089);">DEFI</span>
<i class="act" style="left:2130px;top:1121.9px"></i>
<span class="t" style="left:2154.90px;top:1129px;font-size:21.1px;line-height:21.1px;color:#fff;letter-spacing:-0.278px;transform:scaleX(0.9782);">ACTIVE</span>
<div class="ab" style="left:2290.1px;top:1118.1px;width:101.3px"><svg class="abs" style="left:8.9px;top:5.9px" width="26" height="25" viewBox="0 -2 26 25"><path d="M16.8 1.95 H6.5 A4.55 4.55 0 0 0 1.95 6.5 V15.4 A4.55 4.55 0 0 0 6.5 19.95 H15.5 A4.55 4.55 0 0 0 20.05 15.4 V8.9" fill="none" stroke="#333" stroke-width="3.9"/><path d="M16.8 -0.2 L17.4 -0.2 L17.4 4.1 L13.3 4.1 Z M17.9 8.7 L22.3 8.7 L17.9 12.8 Z" fill="#fff"/><path d="M9.8 14 L10.8 10.9 L17.6 4.1 L19.8 6.1 L12.9 13 Z M22.4 -0.9 L24.8 1.5 L22.4 3.9 L20 1.5 Z" fill="#333"/></svg></div>
<span class="t" style="left:2331.90px;top:1128px;font-size:25.2px;line-height:25.2px;color:#333;letter-spacing:0.515px;transform:scaleX(1.0478);">Edit</span>
<div class="ab" style="left:2398.15px;top:1118.1px"><svg class="abs" style="left:9.9px;top:7.8px" width="24.2" height="20.2" viewBox="0 0 24.2 20.2"><path d="M0.7 0 H23.9 L12.3 11.8 Z M0 4.4 L5.9 10.1 L0 15.9 Z M24.1 5 L18.6 10.1 L24.1 15.2 Z M0.7 20.1 L8.3 12.2 L12.3 16.1 L16.3 12.2 L23.9 20.1 Z" fill="#333"/></svg></div>
<div class="ab" style="left:2452.15px;top:1118.1px"><svg class="abs" style="left:0;top:0" width="43.8" height="39.6" viewBox="0 0 43.8 39.6"><g fill="none" stroke="#333" stroke-width="2.7"><path transform="translate(16.05 14.8) rotate(-43)" d="M0 7.1 V3 A3 3 0 0 1 3 0 H10.6 A3 3 0 0 1 13.6 3 V7 A3 3 0 0 1 10.6 10 H8.6"/><path transform="rotate(180 22.67 17.87) translate(16.05 14.8) rotate(-43)" d="M0 7.1 V3 A3 3 0 0 1 3 0 H10.6 A3 3 0 0 1 13.6 3 V7 A3 3 0 0 1 10.6 10 H8.6"/></g></svg></div>
<div class="ab" style="left:2508.14px;top:1118.1px"><svg class="abs" style="left:11.46px;top:6px" width="22.2" height="24" viewBox="0 0 22.2 24"><path d="M0 0 H22.1 V23.8 H0 Z M2 3.9 V22 H20.1 V3.9 Z" fill="#333" fill-rule="evenodd"/><g stroke="#333" stroke-width="1.9" stroke-linecap="round"><path d="M4.7 6.95 h0.5 M8.9 6.95 h8.1 M4.7 11 h0.5 M8.9 11 h8.1 M4.7 15 h0.5 M8.9 15 h8.1 M4.7 19 h0.5 M8.9 19 h8.1"/></g></svg></div>
<div class="row odd" style="top:1178px"></div>
<i class="cb" style="left:232px;top:1206px"><svg width="24" height="24" viewBox="0 0 24 24"><path d="M5.7 13 L10.2 17.7 L17.8 6.6" fill="none" stroke="#fff" stroke-width="2.7" stroke-linecap="round" stroke-linejoin="miter"/></svg></i>
<span class="t" style="left:284.88px;top:1204px;font-size:25.7px;line-height:25.7px;color:#333;letter-spacing:0.545px;transform:scaleX(1.0575);">Peter Getchell</span>
<span class="t" style="left:823.23px;top:1204px;font-size:25.7px;line-height:25.7px;color:#333;letter-spacing:0.744px;transform:scaleX(1.0670);">pgetch@edulence.com</span>
<i class="bdg g" style="left:1362.3px;top:1194.1px"></i>
<span class="t" style="left:1376.93px;top:1203px;font-size:23.1px;line-height:23.1px;color:#666;letter-spacing:-0.523px;transform:scaleX(0.9697);">SYDE</span>
<i class="bdg" style="left:1468.2px;top:1194.1px"></i>
<span class="t" style="left:1489.63px;top:1203px;font-size:23.1px;line-height:23.1px;color:#666;letter-spacing:0.435px;transform:scaleX(1.0244);">HLD</span>
<i class="bdg" style="left:1728.2px;top:1194.1px"></i>
<span class="t" style="left:1743.90px;top:1203px;font-size:23.1px;line-height:23.1px;color:#666;letter-spacing:-0.020px;transform:scaleX(0.9987);">3PAC</span>
<i class="act" style="left:2130px;top:1197.9px"></i>
<span class="t" style="left:2154.90px;top:1205px;font-size:21.1px;line-height:21.1px;color:#fff;letter-spacing:-0.278px;transform:scaleX(0.9782);">ACTIVE</span>
<div class="ab" style="left:2290.1px;top:1194.1px;width:101.3px"><svg class="abs" style="left:8.9px;top:5.9px" width="26" height="25" viewBox="0 -2 26 25"><path d="M16.8 1.95 H6.5 A4.55 4.55 0 0 0 1.95 6.5 V15.4 A4.55 4.55 0 0 0 6.5 19.95 H15.5 A4.55 4.55 0 0 0 20.05 15.4 V8.9" fill="none" stroke="#333" stroke-width="3.9"/><path d="M16.8 -0.2 L17.4 -0.2 L17.4 4.1 L13.3 4.1 Z M17.9 8.7 L22.3 8.7 L17.9 12.8 Z" fill="#fff"/><path d="M9.8 14 L10.8 10.9 L17.6 4.1 L19.8 6.1 L12.9 13 Z M22.4 -0.9 L24.8 1.5 L22.4 3.9 L20 1.5 Z" fill="#333"/></svg></div>
<span class="t" style="left:2331.90px;top:1204px;font-size:25.2px;line-height:25.2px;color:#333;letter-spacing:0.515px;transform:scaleX(1.0478);">Edit</span>
<div class="ab" style="left:2398.15px;top:1194.1px"><svg class="abs" style="left:9.9px;top:7.8px" width="24.2" height="20.2" viewBox="0 0 24.2 20.2"><path d="M0.7 0 H23.9 L12.3 11.8 Z M0 4.4 L5.9 10.1 L0 15.9 Z M24.1 5 L18.6 10.1 L24.1 15.2 Z M0.7 20.1 L8.3 12.2 L12.3 16.1 L16.3 12.2 L23.9 20.1 Z" fill="#333"/></svg></div>
<div class="ab" style="left:2452.15px;top:1194.1px"><svg class="abs" style="left:0;top:0" width="43.8" height="39.6" viewBox="0 0 43.8 39.6"><g fill="none" stroke="#333" stroke-width="2.7"><path transform="translate(16.05 14.8) rotate(-43)" d="M0 7.1 V3 A3 3 0 0 1 3 0 H10.6 A3 3 0 0 1 13.6 3 V7 A3 3 0 0 1 10.6 10 H8.6"/><path transform="rotate(180 22.67 17.87) translate(16.05 14.8) rotate(-43)" d="M0 7.1 V3 A3 3 0 0 1 3 0 H10.6 A3 3 0 0 1 13.6 3 V7 A3 3 0 0 1 10.6 10 H8.6"/></g></svg></div>
<div class="ab" style="left:2508.14px;top:1194.1px"><svg class="abs" style="left:11.46px;top:6px" width="22.2" height="24" viewBox="0 0 22.2 24"><path d="M0 0 H22.1 V23.8 H0 Z M2 3.9 V22 H20.1 V3.9 Z" fill="#333" fill-rule="evenodd"/><g stroke="#333" stroke-width="1.9" stroke-linecap="round"><path d="M4.7 6.95 h0.5 M8.9 6.95 h8.1 M4.7 11 h0.5 M8.9 11 h8.1 M4.7 15 h0.5 M8.9 15 h8.1 M4.7 19 h0.5 M8.9 19 h8.1"/></g></svg></div>
<div class="row" style="top:1254px"></div>
<i class="cb" style="left:232px;top:1282px"><svg width="24" height="24" viewBox="0 0 24 24"><path d="M5.7 13 L10.2 17.7 L17.8 6.6" fill="none" stroke="#fff" stroke-width="2.7" stroke-linecap="round" stroke-linejoin="miter"/></svg></i>
<span class="t" style="left:285.20px;top:1280px;font-size:25.7px;line-height:25.7px;color:#333;letter-spacing:0.453px;transform:scaleX(1.0451);">Veronika Test</span>
<span class="t" style="left:823.30px;top:1280px;font-size:25.7px;line-height:25.7px;color:#333;letter-spacing:0.621px;transform:scaleX(1.0570);">veronika@edulence.com</span>
<i class="bdg g" style="left:1362.3px;top:1270.1px"></i>
<span class="t" style="left:1376.93px;top:1279px;font-size:23.1px;line-height:23.1px;color:#666;letter-spacing:-0.523px;transform:scaleX(0.9697);">SYDE</span>
<i class="bdg" style="left:1468.2px;top:1270.1px"></i>
<span class="t" style="left:1494.02px;top:1279px;font-size:23.1px;line-height:23.1px;color:#666;letter-spacing:-1.404px;transform:scaleX(0.9262);">NS1</span>
<i class="bdg" style="left:1728.2px;top:1270.1px"></i>
<span class="t" style="left:1749.92px;top:1279px;font-size:23.1px;line-height:23.1px;color:#666;letter-spacing:-0.480px;transform:scaleX(0.9757);">NSA</span>
<i class="bdg" style="left:1828.2px;top:1270.1px"></i>
<span class="t" style="left:1846.19px;top:1279px;font-size:23.1px;line-height:23.1px;color:#666;letter-spacing:0.121px;transform:scaleX(1.0089);">DEFI</span>
<i class="act" style="left:2130px;top:1273.9px"></i>
<span class="t" style="left:2154.90px;top:1281px;font-size:21.1px;line-height:21.1px;color:#fff;letter-spacing:-0.278px;transform:scaleX(0.9782);">ACTIVE</span>
<div class="ab" style="left:2290.1px;top:1270.1px;width:101.3px"><svg class="abs" style="left:8.9px;top:5.9px" width="26" height="25" viewBox="0 -2 26 25"><path d="M16.8 1.95 H6.5 A4.55 4.55 0 0 0 1.95 6.5 V15.4 A4.55 4.55 0 0 0 6.5 19.95 H15.5 A4.55 4.55 0 0 0 20.05 15.4 V8.9" fill="none" stroke="#333" stroke-width="3.9"/><path d="M16.8 -0.2 L17.4 -0.2 L17.4 4.1 L13.3 4.1 Z M17.9 8.7 L22.3 8.7 L17.9 12.8 Z" fill="#fff"/><path d="M9.8 14 L10.8 10.9 L17.6 4.1 L19.8 6.1 L12.9 13 Z M22.4 -0.9 L24.8 1.5 L22.4 3.9 L20 1.5 Z" fill="#333"/></svg></div>
<span class="t" style="left:2331.90px;top:1280px;font-size:25.2px;line-height:25.2px;color:#333;letter-spacing:0.515px;transform:scaleX(1.0478);">Edit</span>
<div class="ab" style="left:2398.15px;top:1270.1px"><svg class="abs" style="left:9.9px;top:7.8px" width="24.2" height="20.2" viewBox="0 0 24.2 20.2"><path d="M0.7 0 H23.9 L12.3 11.8 Z M0 4.4 L5.9 10.1 L0 15.9 Z M24.1 5 L18.6 10.1 L24.1 15.2 Z M0.7 20.1 L8.3 12.2 L12.3 16.1 L16.3 12.2 L23.9 20.1 Z" fill="#333"/></svg></div>
<div class="ab" style="left:2452.15px;top:1270.1px"><svg class="abs" style="left:0;top:0" width="43.8" height="39.6" viewBox="0 0 43.8 39.6"><g fill="none" stroke="#333" stroke-width="2.7"><path transform="translate(16.05 14.8) rotate(-43)" d="M0 7.1 V3 A3 3 0 0 1 3 0 H10.6 A3 3 0 0 1 13.6 3 V7 A3 3 0 0 1 10.6 10 H8.6"/><path transform="rotate(180 22.67 17.87) translate(16.05 14.8) rotate(-43)" d="M0 7.1 V3 A3 3 0 0 1 3 0 H10.6 A3 3 0 0 1 13.6 3 V7 A3 3 0 0 1 10.6 10 H8.6"/></g></svg></div>
<div class="ab" style="left:2508.14px;top:1270.1px"><svg class="abs" style="left:11.46px;top:6px" width="22.2" height="24" viewBox="0 0 22.2 24"><path d="M0 0 H22.1 V23.8 H0 Z M2 3.9 V22 H20.1 V3.9 Z" fill="#333" fill-rule="evenodd"/><g stroke="#333" stroke-width="1.9" stroke-linecap="round"><path d="M4.7 6.95 h0.5 M8.9 6.95 h8.1 M4.7 11 h0.5 M8.9 11 h8.1 M4.7 15 h0.5 M8.9 15 h8.1 M4.7 19 h0.5 M8.9 19 h8.1"/></g></svg></div>
<div class="row odd" style="top:1330px"></div>
<i class="cb" style="left:232px;top:1358px"><svg width="24" height="24" viewBox="0 0 24 24"><path d="M5.7 13 L10.2 17.7 L17.8 6.6" fill="none" stroke="#fff" stroke-width="2.7" stroke-linecap="round" stroke-linejoin="miter"/></svg></i>
<span class="t" style="left:284.84px;top:1356px;font-size:25.7px;line-height:25.7px;color:#333;letter-spacing:0.804px;transform:scaleX(1.0775);">Knowledgelink</span>
<span class="t" style="left:823.24px;top:1356px;font-size:25.7px;line-height:25.7px;color:#333;letter-spacing:0.674px;transform:scaleX(1.0623);">info@edulence.com</span>
<i class="bdg g" style="left:1362.3px;top:1346.1px"></i>
<span class="t" style="left:1376.93px;top:1355px;font-size:23.1px;line-height:23.1px;color:#666;letter-spacing:-0.523px;transform:scaleX(0.9697);">SYDE</span>
<i class="bdg" style="left:1728.2px;top:1346.1px"></i>
<span class="t" style="left:1743.90px;top:1355px;font-size:23.1px;line-height:23.1px;color:#666;letter-spacing:-0.020px;transform:scaleX(0.9987);">3PAC</span>
<i class="bdg" style="left:1828.2px;top:1346.1px"></i>
<span class="t" style="left:1844.08px;top:1355px;font-size:23.1px;line-height:23.1px;color:#666;letter-spacing:0.257px;transform:scaleX(1.0177);">QUIZ</span>
<i class="act" style="left:2130px;top:1349.9px"></i>
<span class="t" style="left:2154.90px;top:1357px;font-size:21.1px;line-height:21.1px;color:#fff;letter-spacing:-0.278px;transform:scaleX(0.9782);">ACTIVE</span>
<div class="ab" style="left:2290.1px;top:1346.1px;width:101.3px"><svg class="abs" style="left:8.9px;top:5.9px" width="26" height="25" viewBox="0 -2 26 25"><path d="M16.8 1.95 H6.5 A4.55 4.55 0 0 0 1.95 6.5 V15.4 A4.55 4.55 0 0 0 6.5 19.95 H15.5 A4.55 4.55 0 0 0 20.05 15.4 V8.9" fill="none" stroke="#333" stroke-width="3.9"/><path d="M16.8 -0.2 L17.4 -0.2 L17.4 4.1 L13.3 4.1 Z M17.9 8.7 L22.3 8.7 L17.9 12.8 Z" fill="#fff"/><path d="M9.8 14 L10.8 10.9 L17.6 4.1 L19.8 6.1 L12.9 13 Z M22.4 -0.9 L24.8 1.5 L22.4 3.9 L20 1.5 Z" fill="#333"/></svg></div>
<span class="t" style="left:2331.90px;top:1356px;font-size:25.2px;line-height:25.2px;color:#333;letter-spacing:0.515px;transform:scaleX(1.0478);">Edit</span>
<div class="ab" style="left:2398.15px;top:1346.1px"><svg class="abs" style="left:9.9px;top:7.8px" width="24.2" height="20.2" viewBox="0 0 24.2 20.2"><path d="M0.7 0 H23.9 L12.3 11.8 Z M0 4.4 L5.9 10.1 L0 15.9 Z M24.1 5 L18.6 10.1 L24.1 15.2 Z M0.7 20.1 L8.3 12.2 L12.3 16.1 L16.3 12.2 L23.9 20.1 Z" fill="#333"/></svg></div>
<div class="ab" style="left:2452.15px;top:1346.1px"><svg class="abs" style="left:0;top:0" width="43.8" height="39.6" viewBox="0 0 43.8 39.6"><g fill="none" stroke="#333" stroke-width="2.7"><path transform="translate(16.05 14.8) rotate(-43)" d="M0 7.1 V3 A3 3 0 0 1 3 0 H10.6 A3 3 0 0 1 13.6 3 V7 A3 3 0 0 1 10.6 10 H8.6"/><path transform="rotate(180 22.67 17.87) translate(16.05 14.8) rotate(-43)" d="M0 7.1 V3 A3 3 0 0 1 3 0 H10.6 A3 3 0 0 1 13.6 3 V7 A3 3 0 0 1 10.6 10 H8.6"/></g></svg></div>
<div class="ab" style="left:2508.14px;top:1346.1px"><svg class="abs" style="left:11.46px;top:6px" width="22.2" height="24" viewBox="0 0 22.2 24"><path d="M0 0 H22.1 V23.8 H0 Z M2 3.9 V22 H20.1 V3.9 Z" fill="#333" fill-rule="evenodd"/><g stroke="#333" stroke-width="1.9" stroke-linecap="round"><path d="M4.7 6.95 h0.5 M8.9 6.95 h8.1 M4.7 11 h0.5 M8.9 11 h8.1 M4.7 15 h0.5 M8.9 15 h8.1 M4.7 19 h0.5 M8.9 19 h8.1"/></g></svg></div>
<div class="pag"><i class="pa"></i></div>
<svg class="abs" style="left:1396.4px;top:1466.5px" width="7.2" height="17.4" viewBox="0 0 7.2 17.4"><path d="M0.2 0 H7 V17.2 H4.6 V2.2 H0.2 Z" fill="#fff"/></svg>
<svg class="abs" style="left:1346px;top:1471px" width="10" height="14" viewBox="0 0 10 14"><path d="M7.4 2.4 L2.8 6.8 L7.4 11.2" fill="none" stroke="#c8c8c8" stroke-width="1.5"/></svg>
<svg class="abs" style="left:1446px;top:1471px" width="10" height="14" viewBox="0 0 10 14"><path d="M2.6 2.4 L7.2 6.8 L2.6 11.2" fill="none" stroke="#c8c8c8" stroke-width="1.5"/></svg>
</main>
<section class="panel"><svg class="abs arrow" width="27" height="14" viewBox="0 0 27 14"><path d="M2.3 12.6 L13.5 1.4 L24.7 12.6 L24.7 14 L2.3 14 Z" fill="#fff"/><path d="M2.5 12.2 L13.5 1.2 L24.5 12.2" fill="none" stroke="#dcdee0" stroke-width="1.8"/></svg></section>
<span class="t" style="left:1838.00px;top:462px;font-size:22.4px;line-height:22.4px;color:#333;letter-spacing:0.066px;transform:scaleX(1.0048);">STATUS</span>
<span class="t" style="left:2073.22px;top:464px;font-size:20.2px;line-height:20.2px;color:#999;letter-spacing:-0.249px;transform:scaleX(0.9819);">RESET</span>
<i class="hl" style="left:1838px;top:498px;width:300px"></i>
<span class="t" style="left:2178.59px;top:462px;font-size:22.4px;line-height:22.4px;color:#333;letter-spacing:0.137px;transform:scaleX(1.0091);">ROLES</span>
<span class="t" style="left:2413.41px;top:464px;font-size:20.2px;line-height:20.2px;color:#999;letter-spacing:-0.203px;transform:scaleX(0.9852);">RESET</span>
<i class="hl" style="left:2178px;top:498px;width:300px"></i>
<svg class="abs" style="left:1838.2px;top:527.2px" width="24" height="23" viewBox="0 0 24 23"><path d="M14.8 1.8 H6.2 A4.4 4.4 0 0 0 1.8 6.2 V14.4 A4.4 4.4 0 0 0 6.2 18.8 H14.6 A4.4 4.4 0 0 0 19 14.4 V10.6" fill="none" stroke="#4c9bbf" stroke-width="3.6"/><path d="M8.2 8 L12 11.8 L21.4 2" fill="none" stroke="#4c9bbf" stroke-width="3.7"/></svg>
<span class="t" style="left:1867.40px;top:527px;font-size:23px;line-height:23px;color:#4c9bbf;font-weight:700;letter-spacing:0.065px;transform:scaleX(1.0223);-webkit-text-stroke:0.55px #4c9bbf;">ACTIVE</span>
<svg class="abs" style="left:1838.2px;top:561.2px" width="24" height="23" viewBox="0 0 24 23"><path d="M14.8 1.8 H6.2 A4.4 4.4 0 0 0 1.8 6.2 V14.4 A4.4 4.4 0 0 0 6.2 18.8 H14.6 A4.4 4.4 0 0 0 19 14.4 V10.6" fill="none" stroke="#4c9bbf" stroke-width="3.6"/><path d="M8.2 8 L12 11.8 L21.4 2" fill="none" stroke="#4c9bbf" stroke-width="3.7"/></svg>
<span class="t" style="left:1868.37px;top:561px;font-size:23px;line-height:23px;color:#4c9bbf;font-weight:700;letter-spacing:0.077px;transform:scaleX(1.0297);-webkit-text-stroke:0.55px #4c9bbf;">INACTIVE</span>
<svg class="abs" style="left:2179.2px;top:527.2px" width="24" height="23" viewBox="0 0 24 23"><path d="M14.8 1.8 H6.2 A4.4 4.4 0 0 0 1.8 6.2 V14.4 A4.4 4.4 0 0 0 6.2 18.8 H14.6 A4.4 4.4 0 0 0 19 14.4 V10.6" fill="none" stroke="#4c9bbf" stroke-width="3.6"/><path d="M8.2 8 L12 11.8 L21.4 2" fill="none" stroke="#4c9bbf" stroke-width="3.7"/></svg>
<span class="t" style="left:2207.97px;top:527px;font-size:23px;line-height:23px;color:#4c9bbf;font-weight:700;letter-spacing:0.113px;transform:scaleX(1.0325);-webkit-text-stroke:0.55px #4c9bbf;">MEMBER</span>
<svg class="abs" style="left:2179.2px;top:561.2px" width="24" height="23" viewBox="0 0 24 23"><path d="M14.8 1.8 H6.2 A4.4 4.4 0 0 0 1.8 6.2 V14.4 A4.4 4.4 0 0 0 6.2 18.8 H14.6 A4.4 4.4 0 0 0 19 14.4 V10.6" fill="none" stroke="#4c9bbf" stroke-width="3.6"/><path d="M8.2 8 L12 11.8 L21.4 2" fill="none" stroke="#4c9bbf" stroke-width="3.7"/></svg>
<span class="t" style="left:2207.60px;top:561px;font-size:23px;line-height:23px;color:#4c9bbf;font-weight:700;letter-spacing:0.263px;transform:scaleX(1.0868);-webkit-text-stroke:0.55px #4c9bbf;">ADMIN</span>
<svg class="abs" style="left:2179.2px;top:595.2px" width="24" height="23" viewBox="0 0 24 23"><path d="M14.8 1.8 H6.2 A4.4 4.4 0 0 0 1.8 6.2 V14.4 A4.4 4.4 0 0 0 6.2 18.8 H14.6 A4.4 4.4 0 0 0 19 14.4 V10.6" fill="none" stroke="#4c9bbf" stroke-width="3.6"/><path d="M8.2 8 L12 11.8 L21.4 2" fill="none" stroke="#4c9bbf" stroke-width="3.7"/></svg>
<span class="t" style="left:2207.96px;top:595px;font-size:23px;line-height:23px;color:#4c9bbf;font-weight:700;letter-spacing:0.101px;transform:scaleX(1.0392);-webkit-text-stroke:0.55px #4c9bbf;">ENTERPRISE ADMIN</span>
<svg class="abs" style="left:2179.2px;top:629.2px" width="24" height="23" viewBox="0 0 24 23"><path d="M14.8 1.8 H6.2 A4.4 4.4 0 0 0 1.8 6.2 V14.4 A4.4 4.4 0 0 0 6.2 18.8 H14.6 A4.4 4.4 0 0 0 19 14.4 V10.6" fill="none" stroke="#4c9bbf" stroke-width="3.6"/><path d="M8.2 8 L12 11.8 L21.4 2" fill="none" stroke="#4c9bbf" stroke-width="3.7"/></svg>
<span class="t" style="left:2208.40px;top:629px;font-size:23px;line-height:23px;color:#4c9bbf;font-weight:700;letter-spacing:0.127px;transform:scaleX(1.0504);-webkit-text-stroke:0.55px #4c9bbf;">OFFICE ADMIN</span>
<span class="t" style="left:1838.77px;top:690px;font-size:22.4px;line-height:22.4px;color:#333;letter-spacing:0.356px;transform:scaleX(1.0286);">MEDIA GROUPS</span>
<i class="hl" style="left:1838px;top:726px;width:640px"></i>
<div class="inp" style="left:1838.2px;top:757.9px;width:639.6px;height:57.7px;border-color:#c6c6c6"></div>
<span class="t" style="left:1848.17px;top:774px;font-size:26.4px;line-height:26.4px;color:#6e6e6e;letter-spacing:0.303px;transform:scaleX(1.0276);">Select Media</span>
<span class="t" style="left:1838.79px;top:850px;font-size:22.4px;line-height:22.4px;color:#333;letter-spacing:0.167px;transform:scaleX(1.0145);">ENTERPRISE/OFFICE</span>
<i class="hl" style="left:1838px;top:886px;width:640px"></i>
<div class="inp" style="left:1838.2px;top:918.1px;width:565.8px;height:61.6px;border-radius:8px 0 0 8px;border-color:#c8c8c8"></div>
<div class="inp" style="left:2402px;top:918.1px;width:75.8px;height:61.6px;border-radius:0 8px 8px 0;border-color:#dedede;border-left-color:#c8c8c8;box-shadow:none"></div>
<span class="t" style="left:1864.39px;top:936px;font-size:26.2px;line-height:26.2px;color:#ccc;letter-spacing:0.115px;transform:scaleX(1.0115);">Select Enterprise</span>
<svg class="abs" style="left:2366.2px;top:943.9px" width="15.6" height="8.1" viewBox="0 0 15.6 8.1"><polygon points="0,0 15.6,0 7.8,8.1" fill="#333"/></svg>
<svg class="abs" style="left:2428px;top:935.6px" width="25" height="25" viewBox="0 0 25 25"><circle cx="12.4" cy="12.5" r="9.95" fill="none" stroke="#808080" stroke-width="3.2"/><path d="M5.6 19.3 L19.2 5.7" stroke="#808080" stroke-width="3.4"/></svg>
<i class="hl" style="left:1838px;top:1010px;width:640px"></i>
<div class="inp" style="left:2390.2px;top:1031.95px;width:87.66px;height:43.8px;border-radius:7px;border-color:#c9c9c9;box-shadow:none"></div>
<span class="t" style="left:2401.39px;top:1042px;font-size:25px;line-height:25px;color:#2a2a2a;letter-spacing:0.110px;transform:scaleX(1.0088);">Close</span>
</div>
</body></html>
